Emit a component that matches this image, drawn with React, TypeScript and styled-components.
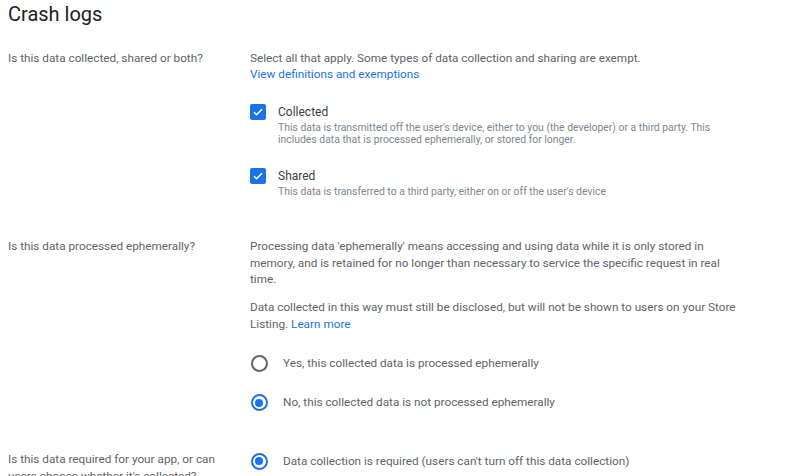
import { FC } from 'react';
import styled, { createGlobalStyle } from 'styled-components';

const GlobalStyle = createGlobalStyle`
    body {
        margin: 0;
        background: #fff;
        font-family: Roboto, 'Noto Sans', Arial, sans-serif;
        color: #5f6368;
    }
`;

const Page = styled.div`
    padding: 0 8px;
`;

const Title = styled.h2`
    margin: 0;
    font-size: 20px;
    line-height: 28px;
    font-weight: 400;
    color: #202124;
`;

const Row = styled.section<{ $top: number }>`
    display: grid;
    grid-template-columns: 242px 494px;
    margin-top: ${(p) => p.$top}px;
`;

const Label = styled.div<{ $pad?: number }>`
    font-size: 11.75px;
    line-height: 16.5px;
    padding-right: 20px;
    padding-top: ${(p) => p.$pad ?? 0}px;
`;

const Body = styled.div`
    font-size: 11.75px;
    line-height: 16.5px;
`;

const Para = styled.p`
    margin: 0 0 11.5px;
    &:last-child {
        margin-bottom: 0;
    }
`;

const Link = styled.a`
    color: #1a73e8;
    text-decoration: none;
`;

const CheckOption = styled.div<{ $top: number }>`
    display: grid;
    grid-template-columns: 16px 1fr;
    column-gap: 12px;
    margin-top: ${(p) => p.$top}px;
`;

const Box = styled.span`
    width: 16px;
    height: 16px;
    border-radius: 2px;
    background: #1a73e8;
    display: flex;
    align-items: center;
    justify-content: center;
`;

const OptionTitle = styled.div`
    font-size: 12px;
    line-height: 16px;
    color: #3c4043;
`;

const OptionDesc = styled.div`
    font-size: 10.4px;
    line-height: 12.5px;
    margin-top: 2px;
    color: #80868b;
`;

const RadioList = styled.div<{ $top: number }>`
    display: flex;
    flex-direction: column;
    gap: 15px;
    margin-top: ${(p) => p.$top}px;
`;

const RadioItem = styled.label`
    display: flex;
    align-items: center;
    height: 24px;
    font-size: 11.75px;
    color: #5f6368;
`;

const Circle = styled.span<{ $on?: boolean }>`
    box-sizing: border-box;
    width: 17px;
    height: 17px;
    margin-left: 0.5px;
    margin-right: 15.5px;
    border-radius: 50%;
    border: 2px solid ${(p) => (p.$on ? '#1a73e8' : '#5f6368')};
    display: flex;
    align-items: center;
    justify-content: center;

    &::after {
        content: '';
        width: 8px;
        height: 8px;
        border-radius: 50%;
        background: ${(p) => (p.$on ? '#1a73e8' : 'transparent')};
    }
`;

const Check: FC = () => (
    <Box>
        <svg width="12" height="12" viewBox="0 0 24 24">
            <path
                d="M4 12.5l5 5L20 6.5"
                fill="none"
                stroke="#fff"
                strokeWidth="3"
            />
        </svg>
    </Box>
);

const Radio: FC<{ on?: boolean; text: string }> = ({ on, text }) => (
    <RadioItem>
        <Circle $on={on} />
        {text}
    </RadioItem>
);

export default function App() {
    return (
        <Page>
            <GlobalStyle />
            <Title>Crash logs</Title>

            <Row $top={21.75}>
                <Label>Is this data collected, shared or both?</Label>
                <Body>
                    <div>
                        Select all that apply. Some types of data collection and
                        sharing are exempt.
                    </div>
                    <Link href="#">View definitions and exemptions</Link>

                    <CheckOption $top={21}>
                        <Check />
                        <div>
                            <OptionTitle>Collected</OptionTitle>
                            <OptionDesc>
                                This data is transmitted off the user's device,
                                either to you (the developer) or a third party.
                                This includes data that is processed
                                ephemerally, or stored for longer.
                            </OptionDesc>
                        </div>
                    </CheckOption>

                    <CheckOption $top={21.5}>
                        <Check />
                        <div>
                            <OptionTitle>Shared</OptionTitle>
                            <OptionDesc>
                                This data is transferred to a third party,
                                either on or off the user's device
                            </OptionDesc>
                        </div>
                    </CheckOption>
                </Body>
            </Row>

            <Row $top={39.5}>
                <Label>Is this data processed ephemerally?</Label>
                <Body>
                    <Para>
                        Processing data 'ephemerally' means accessing and using
                        data while it is only stored in memory, and is retained
                        for no longer than necessary to service the specific
                        request in real time.
                    </Para>
                    <Para>
                        Data collected in this way must still be disclosed, but
                        will not be shown to users on your Store Listing.{' '}
                        <Link href="#">Learn more</Link>
                    </Para>
                    <RadioList $top={19.25}>
                        <Radio text="Yes, this collected data is processed ephemerally" />
                        <Radio on text="No, this collected data is not processed ephemerally" />
                    </RadioList>
                </Body>
            </Row>

            <Row $top={34.75}>
                <Label $pad={2}>
                    Is this data required for your app, or can users choose
                    whether it's collected?
                </Label>
                <Body>
                    <RadioList $top={0}>
                        <Radio on text="Data collection is required (users can't turn off this data collection)" />
                    </RadioList>
                </Body>
            </Row>
        </Page>
    );
}
